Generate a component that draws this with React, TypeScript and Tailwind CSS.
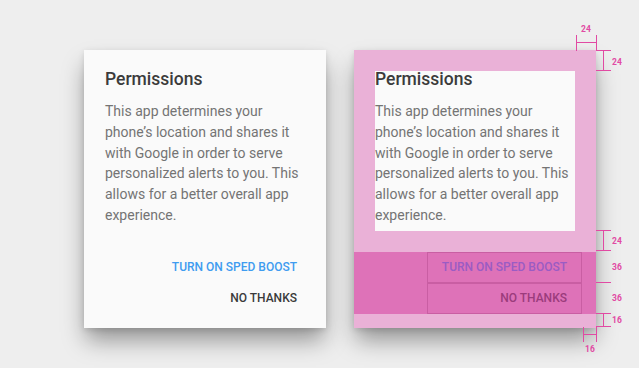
import React from "react";

const body =
  "This app determines your phone\u2019s location and shares it with Google in order to serve personalized alerts to you. This allows for a better overall app experience.";

function Dialog({ keyline }: { keyline?: boolean }) {
  return (
    <div
      className={`w-[242px] shadow-[0_14px_22px_-2px_rgba(0,0,0,0.38),0_2px_6px_rgba(0,0,0,0.12)] ${
        keyline ? "bg-[#eab1d7]" : "bg-[#fafafa]"
      }`}
    >
      <div className="px-[21px] pt-[21px]">
        <div className={`pb-[5px] ${keyline ? "bg-[#fafafa]" : ""}`}>
          <h2 className="text-[17.5px] leading-[16px] font-medium text-[#3b3b3b]">Permissions</h2>
          <p className="mt-[14px] text-[14px] leading-[20.75px] text-[#747474]">{body}</p>
        </div>
      </div>
      <div className="pt-[21px]">
        <div className={`flex justify-end pr-[14px] ${keyline ? "bg-[#de72b8]" : ""}`}>
          <div className="flex flex-col">
            <button
              className={`h-[31px] px-[14px] text-right text-[12px] font-medium uppercase border ${
                keyline ? "border-[#c95ea3] text-[#9a5cc4]" : "border-transparent text-[#3f9cf0]"
              }`}
            >
              Turn on sped boost
            </button>
            <button
              className={`h-[31px] px-[14px] text-right text-[12px] font-medium uppercase border ${
                keyline ? "border-[#c95ea3] text-[#9b3c7c]" : "border-transparent text-[#3a3a3a]"
              }`}
            >
              No thanks
            </button>
          </div>
        </div>
      </div>
      <div className="h-[14px]" />
    </div>
  );
}

// redline spec marks drawn over the keyline card
function Redlines() {
  const c = "#e14aa3";
  const lines = [
    // top 24
    [576.5, 35, 576.5, 51], [596.5, 35, 596.5, 51], [576, 42.5, 596, 42.5],
    // right 24
    [596, 50.5, 611, 50.5], [596, 70.5, 611, 70.5], [603.5, 50, 603.5, 71],
    // content bottom 24
    [596, 230.5, 611, 230.5], [596, 250.5, 611, 250.5], [603.5, 230, 603.5, 251],
    [596, 282.5, 611, 282.5],
    // bottom 16
    [596, 313.5, 611, 313.5], [596, 326.5, 611, 326.5], [603.5, 313, 603.5, 327],
    [583.5, 327, 583.5, 342], [596.5, 327, 596.5, 342], [583, 334.5, 596, 334.5],
  ];
  const labels: [number, number, string][] = [
    [586, 32, "24"], [617, 65, "24"], [617, 244, "24"], [617, 270, "36"],
    [617, 301, "36"], [617, 323, "16"], [590, 352, "16"],
  ];
  return (
    <svg className="absolute inset-0" width="639" height="368">
      {lines.map(([x1, y1, x2, y2], i) => (
        <line key={i} x1={x1} y1={y1} x2={x2} y2={y2} stroke={c} strokeWidth="1" />
      ))}
      {labels.map(([x, y, t], i) => (
        <text key={i} x={x} y={y} fill={c} fontSize="8.5" fontWeight="700" textAnchor="middle" fontFamily="Roboto, sans-serif">
          {t}
        </text>
      ))}
    </svg>
  );
}

export default function App() {
  return (
    <div className="relative w-[639px] h-[368px] overflow-hidden bg-[#eeeeee] font-['Roboto',sans-serif]">
      <div className="flex gap-[28px] pl-[84px] pt-[50px]">
        <Dialog />
        <Dialog keyline />
      </div>
      <Redlines />
    </div>
  );
}
